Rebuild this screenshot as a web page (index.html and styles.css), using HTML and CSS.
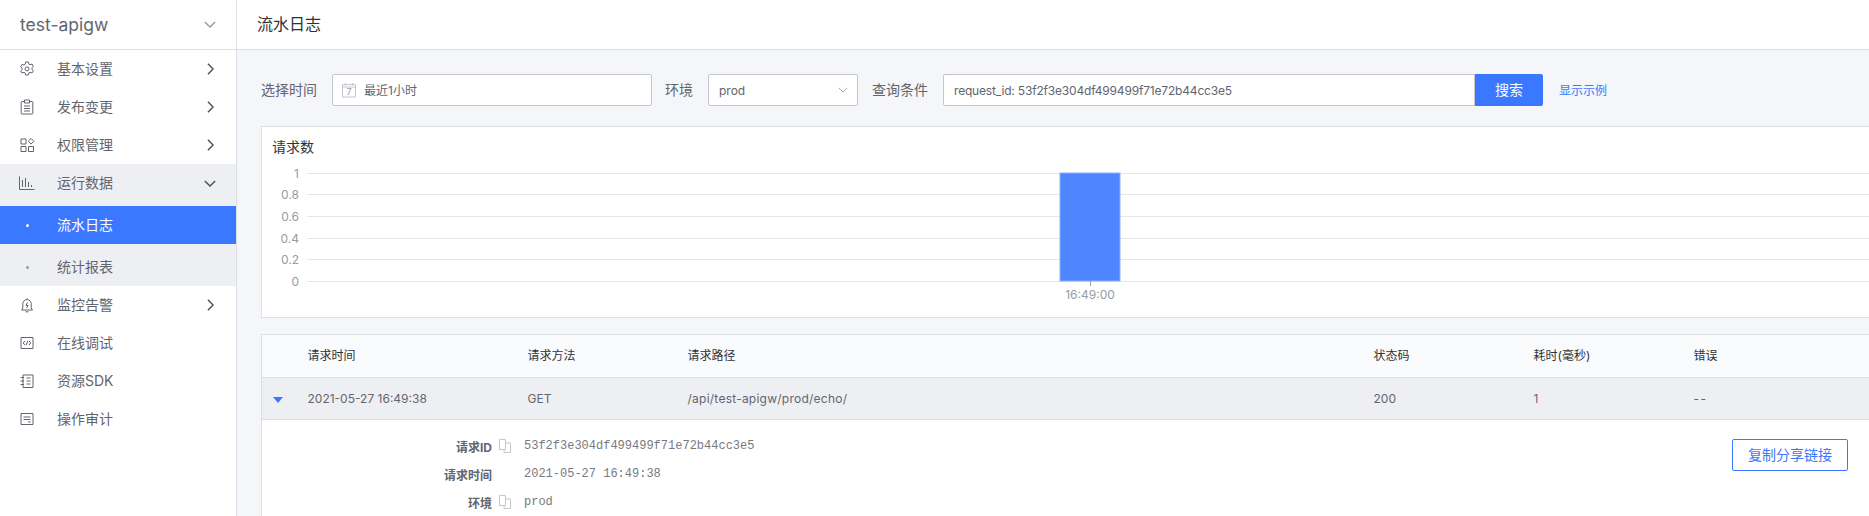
FILE: index.html
```html
<!DOCTYPE html>
<html lang="zh-CN">
<head>
    <meta charset="UTF-8">
    <title>流水日志</title>
    <link rel="stylesheet" href="styles.css">
</head>
<body>

<!-- 左侧菜单 -->
<aside class="sidebar">
    <div class="app-switch">
        <span class="app-name">test-apigw</span>
        <svg class="chevron-top" viewBox="0 0 14 8"><path d="M1 1l6 6 6-6"/></svg>
    </div>
    <ul class="menu">
        <li class="menu-item">
            <svg class="menu-icon" viewBox="0 0 16 16"><path d="M6.600 1h2.800l.4 2 1.200.7 2-.7 1.400 2.400-1.500 1.400v1.400l1.500 1.400-1.400 2.400-2-.7-1.200.7-.4 2H6.600l-.4-2-1.200-.7-2 .7L1.600 10l1.500-1.400V7.200L1.600 5.800 3 3.400l2 .7 1.200-.7z"/><circle cx="8" cy="7.900" r="2"/></svg>
            <span>基本设置</span>
            <svg class="chevron" viewBox="0 0 8 14"><path d="M1 1l6 6-6 6"/></svg>
        </li>
        <li class="menu-item">
            <svg class="menu-icon" viewBox="0 0 16 16"><path d="M5 2.500H3a.8.8 0 0 0-.8.8v10.900a.8.8 0 0 0 .8.8h10a.8.8 0 0 0 .8-.8V3.300a.8.8 0 0 0-.8-.8h-2"/><path d="M5.500 1h5v3h-5zM5 7h6M5 9.500h6M5 12h6"/></svg>
            <span>发布变更</span>
            <svg class="chevron" viewBox="0 0 8 14"><path d="M1 1l6 6-6 6"/></svg>
        </li>
        <li class="menu-item">
            <svg class="menu-icon" viewBox="0 0 16 16"><path d="M2 2h5v5H2zM2 9.500h5v5H2zM9.500 9.500h5v5h-5z"/><path d="M12 1.500l2.800 2.800L12 7.100 9.200 4.300z"/></svg>
            <span>权限管理</span>
            <svg class="chevron" viewBox="0 0 8 14"><path d="M1 1l6 6-6 6"/></svg>
        </li>
        <li class="menu-group">
            <div class="menu-item">
                <svg class="menu-icon" viewBox="0 0 16 16"><path d="M.5 1.500v13h15M3.500 5v7M6.500 3v9M9.500 7v5M12.500 10v2"/></svg>
                <span>运行数据</span>
                <svg class="chevron chevron-open" viewBox="0 0 14 8"><path d="M1 1l6 6 6-6"/></svg>
            </div>
            <div class="sub-item active"><i class="dot"></i><span>流水日志</span></div>
            <div class="sub-item"><i class="dot"></i><span>统计报表</span></div>
        </li>
        <li class="menu-item">
            <svg class="menu-icon" viewBox="0 0 16 16"><path d="M8 1.200v1.300M2.500 13h11l-1.300-2V6.800a4.200 4.200 0 0 0-8.400 0V11zM6.500 14.800h3M8.500 5.500L7 8.500h2l-1.500 2.500"/></svg>
            <span>监控告警</span>
            <svg class="chevron" viewBox="0 0 8 14"><path d="M1 1l6 6-6 6"/></svg>
        </li>
        <li class="menu-item">
            <svg class="menu-icon" viewBox="0 0 16 16"><path d="M2 2.500h12v11H2zM6 6L4.200 8 6 10M10 6l1.800 2L10 10M8.800 5.800L7.200 10.200"/></svg>
            <span>在线调试</span>
        </li>
        <li class="menu-item">
            <svg class="menu-icon" viewBox="0 0 16 16"><path d="M4 2h10v12.500H4zM1.500 4.500h3.500M1.500 8h3.500M1.500 11.500h3.500M7.500 5h4M7.500 8h4M7.500 11h4"/></svg>
            <span>资源SDK</span>
        </li>
        <li class="menu-item">
            <svg class="menu-icon" viewBox="0 0 16 16"><path d="M2 2.500h12v11H2zM4.500 6h7M4.500 8.500h7M9 11h2.500"/></svg>
            <span>操作审计</span>
        </li>
    </ul>
</aside>

<div class="page">
    <header class="page-header">流水日志</header>

    <main class="content">
        <!-- 查询条件 -->
        <form class="toolbar">
            <label class="field-label">选择时间</label>
            <div class="input date-input">
                <svg class="date-icon" viewBox="0 0 16 16"><path d="M1.500 2.500h13v12.500h-13zM1.500 5h13M4.500 1v2.500M11.500 1v2.500"/><text x="8" y="12.500" text-anchor="middle">7</text></svg>
                <span>最近1小时</span>
            </div>
            <label class="field-label env-label">环境</label>
            <div class="input env-select">
                <span>prod</span>
                <svg class="select-arrow" viewBox="0 0 14 8"><path d="M1 1l6 6 6-6"/></svg>
            </div>
            <label class="field-label query-label">查询条件</label>
            <div class="input query-input">request_id: 53f2f3e304df499499f71e72b44cc3e5</div>
            <button type="button" class="search-btn">搜索</button>
            <a class="example-link">显示示例</a>
        </form>

        <!-- 请求数图表 -->
        <section class="chart-card">
            <h3 class="chart-title">请求数</h3>
            <svg class="chart" width="1640" height="152" viewBox="0 0 1640 152">
                <g class="grid-lines">
                    <path d="M45 11.500H1640"/>
                    <path d="M45 32.500H1640"/>
                    <path d="M45 54.500H1640"/>
                    <path d="M45 76.500H1640"/>
                    <path d="M45 97.500H1640"/>
                    <path d="M45 119.500H1640"/>
                </g>
                <g class="axis-labels" text-anchor="end">
                    <text x="37" y="16">1</text>
                    <text x="37" y="37">0.8</text>
                    <text x="37" y="59">0.6</text>
                    <text x="37" y="81">0.4</text>
                    <text x="37" y="102">0.2</text>
                    <text x="37" y="124">0</text>
                </g>
                <rect class="bar" x="798" y="11" width="60" height="108"/>
                <path class="tick" d="M828.500 119v5"/>
                <text class="axis-labels" x="828" y="137" text-anchor="middle">16:49:00</text>
            </svg>
        </section>

        <!-- 日志列表 -->
        <table class="log-table">
            <colgroup>
                <col class="col-toggle"><col class="col-time"><col class="col-method"><col class="col-path">
                <col class="col-status"><col class="col-cost"><col>
            </colgroup>
            <thead>
                <tr>
                    <th></th>
                    <th>请求时间</th>
                    <th>请求方法</th>
                    <th>请求路径</th>
                    <th>状态码</th>
                    <th>耗时(毫秒)</th>
                    <th>错误</th>
                </tr>
            </thead>
            <tbody>
                <tr class="log-row">
                    <td><i class="expand-arrow"></i></td>
                    <td>2021-05-27 16:49:38</td>
                    <td>GET</td>
                    <td class="path-cell">/api/test-apigw/prod/echo/</td>
                    <td>200</td>
                    <td>1</td>
                    <td class="error-cell">--</td>
                </tr>
                <tr>
                    <td colspan="7" class="detail-cell">
                        <div class="detail">
                            <dl class="detail-list">
                                <dt>请求ID</dt>
                                <dd class="copy"><svg class="copy-icon" viewBox="0 0 12 14"><path d="M.5.500h6v10h-6zM7 4h4.500v9.500H5V11"/></svg></dd>
                                <dd class="value">53f2f3e304df499499f71e72b44cc3e5</dd>
                                <dt>请求时间</dt>
                                <dd class="copy"></dd>
                                <dd class="value">2021-05-27 16:49:38</dd>
                                <dt>环境</dt>
                                <dd class="copy"><svg class="copy-icon" viewBox="0 0 12 14"><path d="M.5.500h6v10h-6zM7 4h4.500v9.500H5V11"/></svg></dd>
                                <dd class="value">prod</dd>
                            </dl>
                            <button type="button" class="share-btn">复制分享链接</button>
                        </div>
                    </td>
                </tr>
            </tbody>
        </table>
    </main>
</div>

</body>
</html>
```

FILE: styles.css
```css
* {
    box-sizing: border-box;
}

html, body {
    height: 100%;
}

body {
    margin: 0;
    display: flex;
    overflow: hidden;
    font-family: Inter, "Noto Sans CJK SC", sans-serif;
    font-size: 12px;
    color: #63656e;
    background-color: #f5f6fa;
}

svg {
    display: block;
}

/* 左侧菜单 */
.sidebar {
    width: 237px;
    flex: none;
    background-color: #fff;
    border-right: 1px solid #dcdee5;
}

.app-switch {
    height: 50px;
    display: flex;
    align-items: center;
    justify-content: space-between;
    padding: 0 20px;
    border-bottom: 1px solid #dcdee5;
}

.app-name {
    font-size: 17.5px;
}

.chevron-top {
    width: 12px;
    height: 7px;
    fill: none;
    stroke: #979ba5;
    stroke-width: 1.6;
}

.menu {
    list-style: none;
    margin: 0;
    padding: 0;
}

.menu-item {
    height: 38px;
    display: flex;
    align-items: center;
    padding-left: 19px;
    font-size: 14px;
}

.menu-item span,
.sub-item span {
    margin-bottom: 2px;
}

.menu-icon {
    width: 16px;
    height: 16px;
    margin-right: 22px;
    fill: none;
    stroke: #63656e;
    stroke-width: 1;
}

.chevron {
    width: 7px;
    height: 12px;
    margin-left: auto;
    margin-right: 22px;
    fill: none;
    stroke: #4b4d55;
    stroke-width: 1.6;
}

.chevron-open {
    width: 12px;
    height: 7px;
    margin-right: 20px;
}

.menu-group {
    background-color: #eeeff3;
}

.sub-item {
    height: 38px;
    margin-top: 4px;
    display: flex;
    align-items: center;
    padding-left: 26px;
    font-size: 14px;
}

.sub-item .dot {
    width: 3px;
    height: 3px;
    margin-right: 28px;
    background-color: #979ba5;
    border-radius: 50%;
}

.sub-item.active {
    background-color: #3a78ff;
    color: #fff;
}

.sub-item.active .dot {
    background-color: #fff;
}

/* 右侧内容 */
.page {
    flex: 1;
    min-width: 0;
}

.page-header {
    height: 50px;
    display: flex;
    align-items: center;
    padding: 0 0 3px 20px;
    font-size: 16px;
    color: #313238;
    background-color: #fff;
    border-bottom: 1px solid #dcdee5;
}

.content {
    width: 1640px;
    padding: 24px 0 0 24px;
    box-sizing: content-box;
}

.toolbar {
    height: 32px;
    display: flex;
    align-items: center;
    font-size: 14px;
}

.field-label {
    margin-right: 15px;
    margin-bottom: 2px;
}

.input {
    height: 32px;
    display: flex;
    align-items: center;
    background-color: #fff;
    border: 1px solid #c4c6cc;
    border-radius: 2px;
    font-size: 12px;
}

.date-input {
    width: 320px;
    padding-left: 8px;
}

.date-input span {
    margin-bottom: 2px;
}

.date-icon {
    width: 16px;
    height: 16px;
    margin-right: 7px;
    fill: none;
    stroke: #c4c6cc;
    stroke-width: 1;
}

.date-icon text {
    font-size: 9px;
    fill: #979ba5;
    stroke: none;
}

.env-label {
    margin-left: 13px;
}

.env-select {
    width: 150px;
    justify-content: space-between;
    padding: 0 9px 0 10px;
}

.select-arrow {
    width: 10px;
    height: 6px;
    fill: none;
    stroke: #979ba5;
    stroke-width: 1.3;
}

.query-label {
    margin-left: 14px;
}

.query-input {
    width: 532px;
    padding-left: 10px;
    border-radius: 2px 0 0 2px;
    letter-spacing: -.18px;
}

.search-btn {
    width: 68px;
    height: 32px;
    padding: 0 0 2px;
    border: 0;
    border-radius: 0 2px 2px 0;
    background-color: #3a78ff;
    color: #fff;
    font-family: inherit;
    font-size: 14px;
}

.example-link {
    margin-left: 16px;
    margin-bottom: 2px;
    font-size: 12px;
    color: #3a78ff;
}

.chart-card {
    height: 192px;
    margin-top: 20px;
    background-color: #fff;
    border: 1px solid #dcdee5;
    overflow: hidden;
}

.chart-title {
    margin: 0;
    padding: 10px 0 0 10px;
    height: 36px;
    font-size: 14px;
    font-weight: 400;
    line-height: 20px;
    color: #313238;
}

.chart {
    margin-top: -1px;
}

.grid-lines path {
    fill: none;
    stroke: #e6e7ee;
}

.axis-labels {
    font-size: 12px;
    fill: #979ba5;
}

.bar {
    fill: #4f85ff;
    stroke: #8cafff;
    stroke-width: 1;
}

.tick {
    stroke: #979ba5;
}

.log-table {
    width: 100%;
    margin-top: 16px;
    table-layout: fixed;
    border-collapse: collapse;
    background-color: #fff;
    border: 1px solid #dcdee5;
}

.col-toggle { width: 46px; }
.col-time { width: 220px; }
.col-method { width: 160px; }
.col-path { width: 686px; }
.col-status { width: 160px; }
.col-cost { width: 160px; }

.log-table th {
    height: 43px;
    padding: 0 0 3px;
    text-align: left;
    font-size: 12px;
    font-weight: 400;
    color: #313238;
    background-color: #fafbfd;
    border-bottom: 1px solid #dcdee5;
}

.log-row td {
    height: 42px;
    padding: 0;
    background-color: #eeeff3;
    border-bottom: 1px solid #dcdee5;
}

.log-row .path-cell {
    letter-spacing: .24px;
}

.log-row .error-cell {
    letter-spacing: 1.5px;
}

.expand-arrow {
    display: block;
    width: 0;
    height: 0;
    margin: 2px 0 0 11px;
    border-left: 5px solid transparent;
    border-right: 5px solid transparent;
    border-top: 6px solid #3a78ff;
}

.detail-cell {
    padding: 0;
}

.detail {
    display: flex;
    align-items: flex-start;
    justify-content: space-between;
    height: 120px;
    overflow: hidden;
    padding: 12px 0 0 0;
}

.detail-list {
    margin: 0;
    display: grid;
    grid-template-columns: 230px 32px auto;
    grid-auto-rows: 28px;
    align-items: center;
}

.detail-list dt {
    text-align: right;
    font-size: 12px;
    font-weight: 700;
    color: #63656e;
}

.detail-list dd {
    margin: 0;
}

.detail-list .copy {
    padding-left: 7px;
}

.copy-icon {
    width: 12px;
    height: 14px;
    fill: none;
    stroke: #c4c6cc;
    stroke-width: 1;
}

.detail-list .value {
    font-family: "Liberation Mono", monospace;
    font-size: 12px;
    color: #777a82;
}

.share-btn {
    width: 116px;
    height: 32px;
    margin-right: 52px;
    margin-top: 7px;
    padding: 0 0 2px;
    background-color: #fff;
    border: 1px solid #3a78ff;
    border-radius: 2px;
    color: #3a78ff;
    font-family: inherit;
    font-size: 14px;
}
```
